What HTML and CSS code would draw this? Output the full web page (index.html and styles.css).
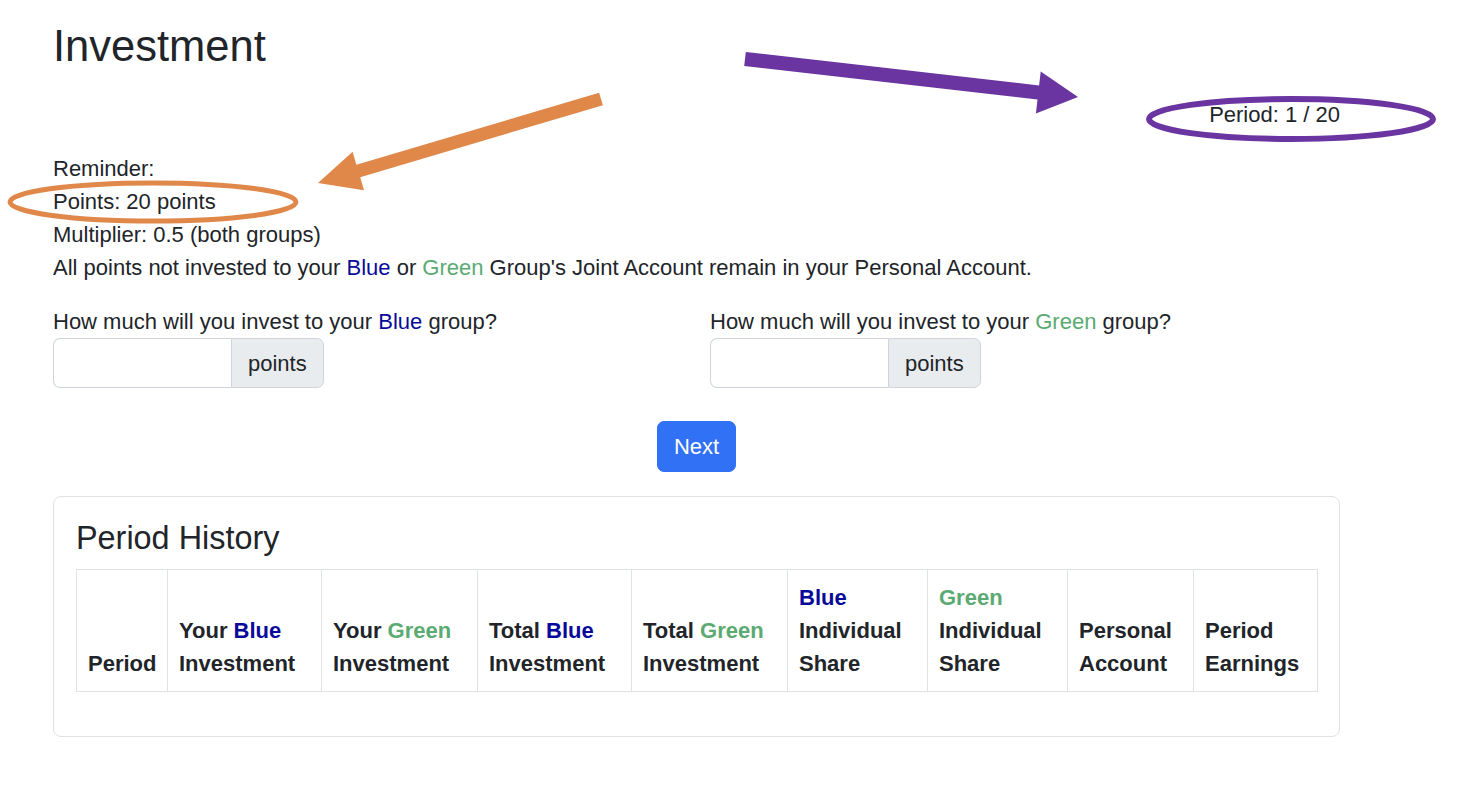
FILE: index.html
```html
<!DOCTYPE html>
<html lang="en">
<head>
<meta charset="utf-8">
<title>Investment</title>
<link rel="stylesheet" href="styles.css">
</head>
<body>
<div class="page">
  <h2 class="title">Investment</h2>
  <div class="period">Period: 1 / 20</div>
  <p class="reminder">
    Reminder:<br>
    Points: 20 points<br>
    Multiplier: 0.5 (both groups)<br>
    All points not invested to your <span class="blue">Blue</span> or <span class="green">Green</span> Group's Joint Account remain in your Personal Account.
  </p>
  <div class="fields">
    <div class="field">
      <label class="label">How much will you invest to your <span class="blue">Blue</span> group?</label>
      <div class="input-group">
        <input class="input" type="text">
        <span class="addon">points</span>
      </div>
    </div>
    <div class="field">
      <label class="label">How much will you invest to your <span class="green">Green</span> group?</label>
      <div class="input-group">
        <input class="input" type="text">
        <span class="addon">points</span>
      </div>
    </div>
  </div>
  <div class="actions">
    <button class="btn">Next</button>
  </div>
  <div class="card">
    <h4 class="card-title">Period History</h4>
    <table class="history">
      <colgroup>
        <col class="c1"><col class="c2"><col class="c3"><col class="c4"><col class="c5"><col class="c6"><col class="c7"><col class="c8"><col class="c9">
      </colgroup>
      <thead>
        <tr>
          <th>Period</th>
          <th>Your <span class="blue">Blue</span><br>Investment</th>
          <th>Your <span class="green">Green</span><br>Investment</th>
          <th>Total <span class="blue">Blue</span><br>Investment</th>
          <th>Total <span class="green">Green</span><br>Investment</th>
          <th><span class="blue">Blue</span><br>Individual<br>Share</th>
          <th><span class="green">Green</span><br>Individual<br>Share</th>
          <th>Personal<br>Account</th>
          <th>Period<br>Earnings</th>
        </tr>
      </thead>
    </table>
  </div>
</div>
<svg class="annotations" width="1464" height="808" viewBox="0 0 1464 808" xmlns="http://www.w3.org/2000/svg">
  <polygon fill="#e0874a" points="599.1,92.8 356.4,164.8 352.6,151.8 318,183 364,190.2 360.2,177.2 602.9,105.2"/>
  <ellipse cx="153" cy="202" rx="143" ry="19" fill="none" stroke="#e0874a" stroke-width="5"/>
  <polygon fill="#6a35a0" points="745.8,52 1039.1,85.5 1040.7,71.6 1078,97 1035.9,113.4 1037.5,99.5 744.2,66"/>
  <ellipse cx="1291" cy="119" rx="142" ry="20" fill="none" stroke="#6a35a0" stroke-width="6"/>
</svg>
</body>
</html>
```

FILE: styles.css
```css
html, body {
  margin: 0;
  padding: 0;
  background: #ffffff;
}

body {
  font-family: "Liberation Sans", Arial, sans-serif;
  font-size: 22px;
  line-height: 33px;
  color: #212529;
  position: relative;
  width: 1464px;
  height: 808px;
  overflow: hidden;
}

.page {
  padding-left: 53px;
  width: 1287px;
}

.title {
  margin: 20px 0 25px;
  font-size: 43.5px;
  line-height: 53px;
  font-weight: 500;
}

.period {
  text-align: right;
  margin-bottom: 21px;
}

.reminder {
  margin: 0 0 21px;
}

.blue {
  color: #0a0a9a;
}

.green {
  color: #5aaa72;
}

.fields {
  display: grid;
  grid-template-columns: 1fr 1fr;
  column-gap: 27px;
}

.label {
  display: block;
}

.input-group {
  display: flex;
  width: 272px;
}

.input {
  box-sizing: border-box;
  width: 178px;
  height: 50px;
  margin: 0;
  padding: 7.5px 16px;
  font: inherit;
  border: 1px solid #ced4da;
  border-right: none;
  border-radius: 7px 0 0 7px;
  background: #fff;
  outline: none;
}

.addon {
  box-sizing: border-box;
  height: 50px;
  padding: 7.5px 16px;
  background: #e9ecef;
  border: 1px solid #ced4da;
  border-radius: 0 7px 7px 0;
  white-space: nowrap;
}

.actions {
  display: flex;
  justify-content: center;
  margin-top: 33px;
}

.btn {
  box-sizing: border-box;
  height: 51px;
  padding: 8px 16px;
  font: inherit;
  color: #ffffff;
  background: #3171f5;
  border: 1px solid #3171f5;
  border-radius: 7px;
}

.card {
  box-sizing: border-box;
  margin-top: 24px;
  border: 1px solid #dfe1e4;
  border-radius: 8px;
  padding: 22px 22px 22px;
}

.card-title {
  margin: 0 0 11px;
  font-size: 32.4px;
  line-height: 39px;
  font-weight: 500;
}

.history {
  width: 1241px;
  table-layout: fixed;
  border-collapse: collapse;
  margin-bottom: 22px;
}

.history th {
  border: 1px solid #dee2e6;
  padding: 11px 11px;
  text-align: left;
  vertical-align: bottom;
  font-weight: 700;
  white-space: nowrap;
}

.c1 { width: 91px; }
.c2 { width: 154px; }
.c3 { width: 156px; }
.c4 { width: 154px; }
.c5 { width: 156px; }
.c6 { width: 140px; }
.c7 { width: 140px; }
.c8 { width: 126px; }
.c9 { width: 124px; }

.annotations {
  position: absolute;
  left: 0;
  top: 0;
  pointer-events: none;
}
```
